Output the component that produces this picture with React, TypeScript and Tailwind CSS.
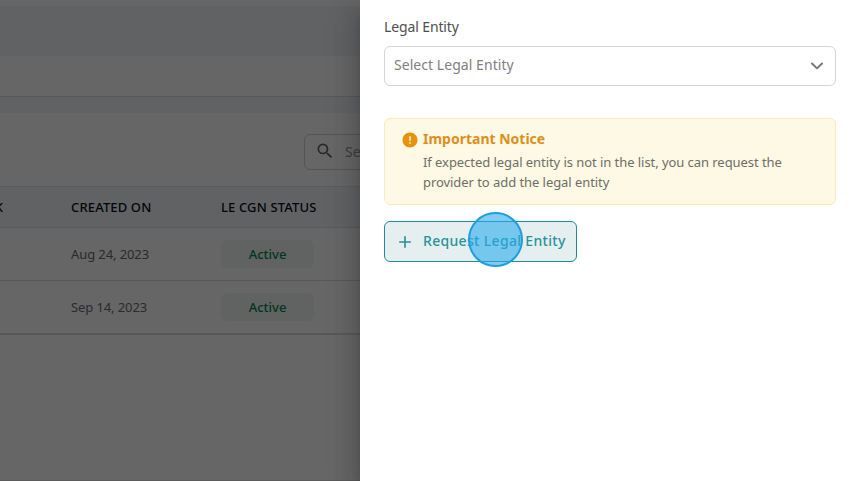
import { MdSearch, MdError, MdAdd } from "react-icons/md";

const rows = [
  { id: 1, createdOn: "Aug 24, 2023", status: "Active" },
  { id: 2, createdOn: "Sep 14, 2023", status: "Active" },
];

function EntityTable() {
  return (
    <div className="w-[360px] h-full overflow-hidden flex flex-col bg-white">
      <div className="h-[6px] shrink-0" />
      <div className="h-[50px] shrink-0 bg-[#f2f6fa]" />
      <div className="h-[41px] shrink-0 border-b border-[#dcdee2]" />
      <div className="h-4 shrink-0 bg-[#f2f6fa]" />
      <div className="h-[74px] shrink-0 pt-[21px] pl-[304px] border-b border-[#e2e5ea]">
        <div className="w-[240px] h-9 flex items-center rounded-md border border-[#d2d3d5] pl-[10px]">
          <MdSearch size={20} className="-mt-[2px] text-[#666]" />
          <span className="ml-[10px] -mt-[2px] text-[14px] text-[#999]">
            Search
          </span>
        </div>
      </div>
      <div className="h-[41px] shrink-0 flex items-center pt-px bg-[#f2f6fa] border-b border-[#dfe2e7] text-[13px] font-medium tracking-[0.14px] text-[#0c0c20] whitespace-nowrap">
        <div className="w-[71px] shrink-0 flex">
          <span className="w-[3px] flex justify-end">LINK</span>
        </div>
        <div className="w-[150px] shrink-0">CREATED ON</div>
        <div>LE CGN STATUS</div>
      </div>
      {rows.map((row) => (
        <div
          key={row.id}
          className="h-[53px] shrink-0 flex items-center border-b border-[#dcdcdf] text-[13px] text-[#6c6c6c]"
        >
          <div className="w-[150px] ml-[71px] pt-[2px] shrink-0 tracking-[-0.1px]">
            {row.createdOn}
          </div>
          <div className="w-[93px] h-7 pt-px rounded-md flex items-center justify-center bg-[#f0f7f5] text-[#008a4e] font-medium">
            {row.status}
          </div>
        </div>
      ))}
      <div className="h-px shrink-0 bg-[#dcdcdf]" />
      <div className="mt-auto h-px shrink-0 bg-[#e4e4e6]" />
    </div>
  );
}

function Drawer() {
  return (
    <div className="absolute inset-y-0 right-0 w-[500px] bg-white px-6 pt-[17px] shadow-[0_8px_10px_-5px_rgba(0,0,0,0.2),0_16px_24px_2px_rgba(0,0,0,0.14),0_6px_30px_5px_rgba(0,0,0,0.12)]">
      <label className="block h-5 leading-5 text-[14px] tracking-[-0.12px] text-[#505050]">
        Legal Entity
      </label>
      <div className="mt-[9px] h-10 flex items-center justify-between rounded-md border border-[#d4d5d7] pl-[9px] pr-3">
        <span className="text-[14px] tracking-[0.05px] text-[#808080] -mt-[3px]">
          Select Legal Entity
        </span>
        <svg width="12" height="8" viewBox="0 0 12 8" fill="none">
          <path
            d="M1 1.5 6 6.4 11 1.5"
            stroke="#77797c"
            strokeWidth="2"
            strokeLinecap="round"
            strokeLinejoin="round"
          />
        </svg>
      </div>
      <div className="mt-8 h-[87px] flex rounded-md border border-[#f7ebc0] bg-[#fef9e5] pl-4 pt-[10px]">
        <MdError size={18} className="mt-[2px] shrink-0 text-[#e5920c]" />
        <div className="ml-1">
          <p className="text-[14px] leading-5 font-bold text-[#dd8f1c]">
            Important Notice
          </p>
          <p className="mt-[3px] w-[380px] text-[13px] leading-5 tracking-[-0.06px] text-[#6e6e66]">
            If expected legal entity is not in the list, you can request the
            provider to add the legal entity
          </p>
        </div>
      </div>
      <button className="relative mt-4 w-[193px] h-[41px] flex items-center rounded-md border border-[#1f8c96] bg-[#e5efef] pl-[10px] text-[#2a929b]">
        <MdAdd size={20} className="mt-px" />
        <span className="ml-2 text-[14px] font-medium tracking-[0.32px] whitespace-nowrap -mt-[2px]">
          Request Legal Entity
        </span>
        <span className="absolute left-[83px] top-[-10px] size-[55px] rounded-full border-2 border-[#1d9fe0] bg-[#29abec]/60" />
      </button>
    </div>
  );
}

export default function App() {
  return (
    <div className="relative w-[860px] h-[481px] overflow-hidden bg-white font-['Noto_Sans',sans-serif]">
      <EntityTable />
      <div className="absolute inset-0 bg-black/60" />
      <Drawer />
    </div>
  );
}
